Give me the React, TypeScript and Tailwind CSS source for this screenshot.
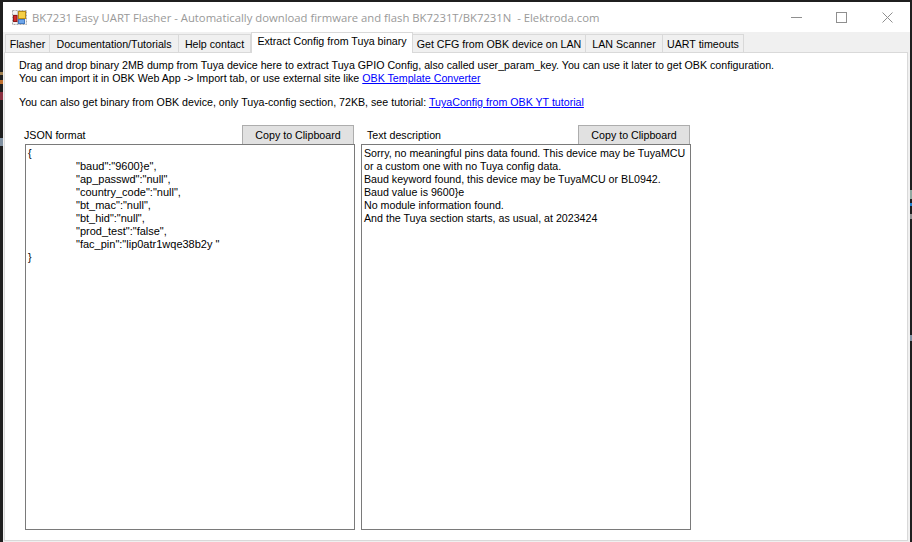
const tabs = [
  { name: 'Flasher', width: 'w-[45px]' },
  { name: 'Documentation/Tutorials', width: 'w-[129px]' },
  { name: 'Help contact', width: 'w-[72px]' },
  { name: 'Extract Config from Tuya binary', width: 'w-[162px]', active: true },
  { name: 'Get CFG from OBK device on LAN', width: 'w-[173px]' },
  { name: 'LAN Scanner', width: 'w-[77px]' },
  { name: 'UART timeouts', width: 'w-[81px]' },
];

const jsonRows = [
  '"baud":"9600}e",',
  '"ap_passwd":"null",',
  '"country_code":"null",',
  '"bt_mac":"null",',
  '"bt_hid":"null",',
  '"prod_test":"false",',
  '"fac_pin":"lip0atr1wqe38b2y "',
];

const textRows = [
  'Sorry, no meaningful pins data found. This device may be TuyaMCU',
  'or a custom one with no Tuya config data.',
  'Baud keyword found, this device may be TuyaMCU or BL0942.',
  'Baud value is 9600}e',
  'No module information found.',
  'And the Tuya section starts, as usual, at 2023424',
];

function AppIcon() {
  return (
    <svg width="15" height="15" viewBox="0 0 15 15" className="shrink-0">
      <rect x="0.5" y="0.5" width="14" height="14" fill="#f2f2f2" stroke="#a8a8a8" strokeDasharray="2 1" />
      <path d="M5.5 1V14M1 5H5" stroke="#c4c4c4" />
      <rect x="6.5" y="1.5" width="7" height="7" fill="#f5cf45" stroke="#b98a14" />
      <rect x="1.5" y="5.5" width="3.5" height="6" fill="#d62a2a" stroke="#8c1a1a" />
      <rect x="6.5" y="9.5" width="6" height="4" fill="#6ea6ea" stroke="#4379c0" />
    </svg>
  );
}

function CopyButton() {
  return (
    <button className="flex h-[20px] w-[112px] items-center justify-center border border-[#adadad] bg-[#e1e1e1] text-[10.67px] text-black">
      Copy to Clipboard
    </button>
  );
}

export default function App() {
  return (
    <div className="relative flex h-[542px] w-[912px] flex-col overflow-hidden bg-[#1f1f1f] pt-[2px] pr-[2px] pl-[3px] font-['Liberation_Sans',sans-serif] text-[10.67px] leading-[13px] text-black">
      {/* bits of the desktop showing beside the window */}
      <span className="absolute top-[72px] left-0 h-[3px] w-[3px] bg-[#a08050]" />
      <span className="absolute top-[80px] left-0 h-[4px] w-[3px] bg-[#c07030]" />
      <span className="absolute top-[92px] left-0 h-[8px] w-[3px] bg-[#8a3040]" />
      <span className="absolute top-[138px] left-0 h-[8px] w-[3px] bg-[#8090a0]" />
      <span className="absolute top-[190px] right-0 h-[9px] w-[2px] bg-[#90a8a0]" />
      <span className="absolute top-[203px] right-0 h-[3px] w-[2px] bg-[#2080d0]" />
      <span className="absolute top-[214px] right-0 h-[5px] w-[2px] bg-[#909090]" />
      <span className="absolute top-[335px] right-0 h-[6px] w-[2px] bg-[#8090a0]" />

      <div className="flex min-h-0 flex-1 flex-col bg-white">
        {/* Title bar */}
        <div className="flex h-[30px] shrink-0 items-center pl-[9px]">
          <AppIcon />
          <span className="ml-[5px] font-['Open_Sans',sans-serif] text-[11.3px] whitespace-pre text-[#999999]">BK7231 Easy UART Flasher - Automatically download firmware and flash BK7231T/BK7231N  - Elektroda.com</span>
          <div className="ml-auto flex items-center">
            <svg width="11" height="11" viewBox="0 0 11 11" className="mr-[34px]"><path d="M0 5.5H11" stroke="#8f8f8f" /></svg>
            <svg width="11" height="11" viewBox="0 0 11 11" className="mr-[35px]"><rect x="0.5" y="0.5" width="10" height="10" fill="none" stroke="#8f8f8f" /></svg>
            <svg width="11" height="11" viewBox="0 0 11 11" className="mr-[17px]"><path d="M0.5 0.5L10.5 10.5M10.5 0.5L0.5 10.5" stroke="#8f8f8f" /></svg>
          </div>
        </div>

        <div className="flex min-h-0 flex-1 flex-col bg-[#f0f0f0] pr-[2px] pb-[1px] pl-[1px]">
          {/* Tabs */}
          <div className="flex h-[20px] shrink-0 items-end pl-[1px]">
            {tabs.map((tab) => (
              <div
                key={tab.name}
                className={
                  tab.active
                    ? `z-10 -mb-[1px] flex h-[21px] ${tab.width} items-start justify-center border border-b-0 border-[#d9d9d9] bg-white pt-[2px] whitespace-nowrap`
                    : `flex h-[18px] ${tab.width} items-center justify-center border-t border-r border-[#d9d9d9] first:border-l bg-[#f0f0f0] pt-[2px] whitespace-nowrap`
                }
              >
                {tab.name}
              </div>
            ))}
          </div>

          {/* Tab page */}
          <div className="flex min-h-0 flex-1 flex-col border border-[#d9d9d9] bg-white pt-[6px] pl-[14px]">
            <p className="whitespace-pre">Drag and drop binary 2MB dump from Tuya device here to extract Tuya GPIO Config, also called user_param_key. You can use it later to get OBK configuration.</p>
            <p className="whitespace-pre">You can import it in OBK Web App -&gt; Import tab, or use external site like <a className="text-[#0000ff] underline">OBK Template Converter</a></p>
            <p className="mt-[11px] whitespace-pre">You can also get binary from OBK device, only Tuya-config section, 72KB, see tutorial: <a className="text-[#0000ff] underline">TuyaConfig from OBK YT tutorial</a></p>

            <div className="mt-[16px] ml-[6px] flex gap-[6px]">
              {/* JSON column */}
              <div className="flex w-[330px] flex-col">
                <div className="flex h-[20px] items-end justify-between">
                  <span className="-ml-[1px] pb-[3px]">JSON format</span>
                  <span className="mr-[1px]"><CopyButton /></span>
                </div>
                <div className="-mt-[1px] h-[386px] border border-[#7a7a7a] bg-white pt-[2px] pl-[2px]">
                  <p>{'{'}</p>
                  {jsonRows.map((row) => (
                    <p key={row} className="pl-[48px] text-[11px] whitespace-pre">{row}</p>
                  ))}
                  <p>{'}'}</p>
                </div>
              </div>

              {/* Text column */}
              <div className="flex w-[330px] flex-col">
                <div className="flex h-[20px] items-end justify-between">
                  <span className="pb-[3px] pl-[6px]">Text description</span>
                  <span className="mr-[1px]"><CopyButton /></span>
                </div>
                <div className="-mt-[1px] h-[386px] border border-[#7a7a7a] bg-white pt-[2px] pl-[2px]">
                  {textRows.map((row) => (
                    <p key={row} className="whitespace-pre">{row}</p>
                  ))}
                </div>
              </div>
            </div>
          </div>
        </div>
      </div>
    </div>
  );
}
